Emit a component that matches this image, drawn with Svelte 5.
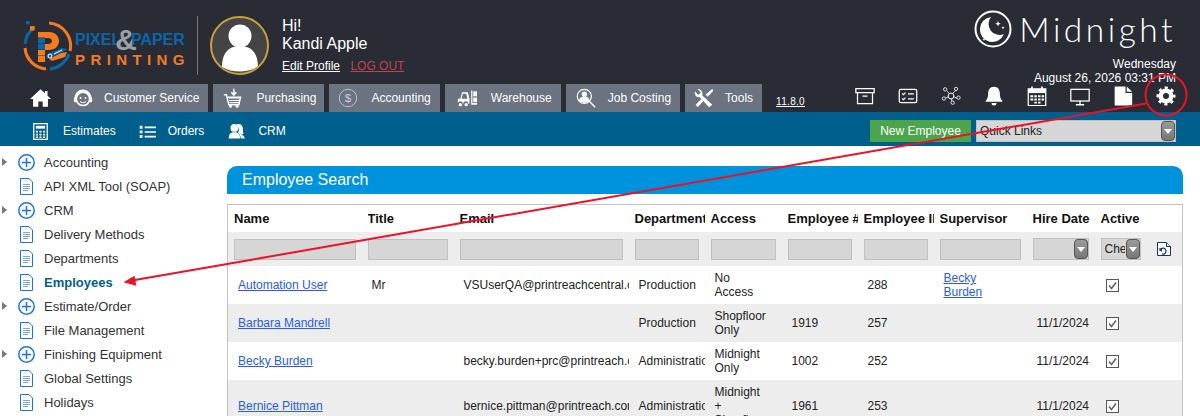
<script>
  const tabs = [
    { label: "Customer Service", w: 20, gap: 11, pl: 9, pr: 9, icon: `<circle cx="12" cy="13" r="8" fill="none" stroke="#fff" stroke-width="2"/><path d="M3 12a9 9 0 0 1 18 0" fill="none" stroke="#fff" stroke-width="2.4"/><rect x="1" y="11" width="3.5" height="6" rx="1.5" fill="#fff"/><rect x="19.5" y="11" width="3.5" height="6" rx="1.5" fill="#fff"/><circle cx="9" cy="12" r="1.2" fill="#fff"/><circle cx="15" cy="12" r="1.2" fill="#fff"/><path d="M8.5 16c2 2 5 2 7 0" fill="none" stroke="#fff" stroke-width="1.5"/>` },
    { label: "Purchasing", w: 20, gap: 13, pl: 10, pr: 8, icon: `<path d="M1 8h3l3 12h12l2-9H6" fill="none" stroke="#fff" stroke-width="1.8"/><path d="M7 12h13M7.500 15h12M8 17.500h11" stroke="#fff" stroke-width="1.4"/><path d="M13 1v6M10 5l3 3.500L16 5" fill="none" stroke="#fff" stroke-width="1.8"/><circle cx="9" cy="22" r="1.800" fill="#fff"/><circle cx="17" cy="22" r="1.800" fill="#fff"/>` },
    { label: "Accounting", w: 20, gap: 13, pl: 9, pr: 9, icon: `<circle cx="12" cy="12" r="10.500" fill="none" stroke="#ccd" stroke-width="1"/><text x="12" y="17" text-anchor="middle" font-size="14" fill="#ccd" font-family="Liberation Sans">$</text>` },
    { label: "Warehouse", w: 26, gap: 11, pl: 9, pr: 9, icon: `<path d="M1 13h3l2-8h7l2 8v6h-1.500a3 3 0 0 0-6 0H7a3 3 0 0 0-6 0zM7 7l-1.500 6h7L11 7z" fill="#fff" fill-rule="evenodd"/><circle cx="4" cy="20" r="2" fill="#fff"/><circle cx="11" cy="20" r="2" fill="#fff"/><path d="M17 3h1.500v15H24v2h-7z" fill="#fff"/><rect x="19.500" y="4" width="4.500" height="6" fill="#fff"/><rect x="19.500" y="11.500" width="4.500" height="5.500" fill="#fff"/>` },
    { label: "Job Costing", w: 20, gap: 12, pl: 10, pr: 9, icon: `<circle cx="10" cy="10" r="8.500" fill="none" stroke="#fff" stroke-width="1.500"/><circle cx="10" cy="7.500" r="3.200" fill="#fff"/><path d="M3.500 15c1-4 3.500-4.500 6.500-4.500s5.500.5 6.500 4.500c-3 3.500-10 3.500-13 0z" fill="#fff"/><path d="M16 16l7 7" stroke="#fff" stroke-width="1.800"/>` },
    { label: "Tools", w: 20, gap: 11, pl: 9, pr: 9, icon: `<path d="M4 1l4 4-1 2-2 1-4-4c-1 4 2 8 6 7l11 12 4-3L10 9c1-4-2-8-6-8z" fill="#fff"/><path d="M22 1l-8 7 2.500 2.500L23 3.500zM9 13l-7 7 2.500 3L11 16z" fill="#fff"/>` }
  ]

  const subLinks = [
    { label: "Estimates", w: 17, gap: 14, ml: 32, icon: `<path d="M2.500 1h19v22h-19z" fill="none" stroke="#fff" stroke-width="1.800"/><rect x="5.500" y="4" width="13" height="4" fill="#fff"/><path d="M5.500 11h3v2.500h-3zM10.500 11h3v2.500h-3zM15.500 11h3v2.500h-3zM5.500 15h3v2.500h-3zM10.500 15h3v2.500h-3zM15.500 15h3v2.500h-3zM5.500 19h3v2h-3zM10.500 19h3v2h-3zM15.500 19h3v2h-3z" fill="#fff"/>` },
    { label: "Orders", w: 17, gap: 12, ml: 23, icon: `<path d="M1 4h4v4H1zM1 10.500h4v4H1zM1 17h4v4H1zM8 5h16v2.400H8zM8 11.500h16v2.400H8zM8 18h16v2.400H8z" fill="#fff"/>` },
    { label: "CRM", w: 19, gap: 12, ml: 23, icon: `<circle cx="9" cy="7" r="5.500" fill="#fff"/><path d="M1 22c0-6 2-9 8-9s8 3 8 9z" fill="#fff"/><path d="M12 2c5-2 9 1 9 6 0 3 0 5 1 7-1 1-3 1-4 1 3 1 5 3 6 6h-6c0-4-2-7-4-9 2-2 2-7-2-11z" fill="#fff"/>` }
  ]

  const tools = [
    { icon: `<path d="M1 3h22v5H1zM3 8v13h18V8M9 12h6" fill="none" stroke="#fff" stroke-width="1.500"/>` },
    { icon: `<rect x="1.500" y="4" width="21" height="16" rx="2" fill="none" stroke="#fff" stroke-width="1.500"/><path d="M5 9l1.500 1.500L9 8M5 15l1.500 1.500L9 14M12 9.500h7M12 15.500h7" fill="none" stroke="#fff" stroke-width="1.400"/>` },
    { icon: `<path d="M7 6l5 5 6-6M12 11l-7 4M12 11l1 7M13 12l7 3" stroke="#fff" stroke-width="1" fill="none"/><circle cx="12" cy="12" r="3.500" fill="#292c35" stroke="#fff" stroke-width="1.200"/><circle cx="5" cy="4" r="2" fill="#292c35" stroke="#fff"/><circle cx="18" cy="3.500" r="2" fill="#292c35" stroke="#fff"/><circle cx="3.500" cy="15" r="2" fill="#292c35" stroke="#fff"/><circle cx="14" cy="20" r="2" fill="#292c35" stroke="#fff"/><circle cx="21" cy="14" r="2" fill="#292c35" stroke="#fff"/>` },
    { icon: `<path d="M12 1c-5 0-7 4-7 8 0 4-1 7-3 9v1h20v-1c-2-2-3-5-3-9 0-4-2-8-7-8z" fill="#fff"/><path d="M9 20.500a3 3 0 0 0 6 0z" fill="#fff"/>` },
    { icon: `<path d="M1.500 3.500h21v20h-21z" fill="none" stroke="#fff" stroke-width="1.500"/><path d="M1.500 3.500h21v5h-21z" fill="#fff"/><path d="M6 .5v5M18 .5v5" stroke="#fff" stroke-width="2"/><path d="M4 11h3.500v2.500H4zM8.800 11h3v2.500h-3zM13.200 11h3v2.500h-3zM17.500 11h3v2.500h-3zM4 15h3.500v2.500H4zM8.800 15h3v2.500h-3zM13.200 15h3v2.500h-3zM17.500 15h3v2.500h-3zM8.800 19h3v2h-3zM13.200 19h3v2h-3z" fill="#fff"/>` },
    { icon: `<rect x="1" y="4" width="22" height="14" fill="none" stroke="#fff" stroke-width="1.500"/><path d="M12 18v4M7 22.500h10" stroke="#fff" stroke-width="1.600"/>` },
    { icon: `<path d="M2 .5h13v8h8v15H2z" fill="#fff"/><path d="M16.500.5l6.500 6.500h-6.500z" fill="#fff"/>` },
    { icon: `<circle cx="12" cy="12" r="6.300" fill="none" stroke="#fff" stroke-width="5.400"/><circle cx="12" cy="12" r="9.800" fill="none" stroke="#fff" stroke-width="3.200" stroke-dasharray="3.800 3.900" stroke-dashoffset="1.900"/>` }
  ]

  const tree = [
    { label: "Accounting", folder: true },
    { label: "API XML Tool (SOAP)" },
    { label: "CRM", folder: true },
    { label: "Delivery Methods" },
    { label: "Departments" },
    { label: "Employees", active: true },
    { label: "Estimate/Order", folder: true },
    { label: "File Management" },
    { label: "Finishing Equipment", folder: true },
    { label: "Global Settings" },
    { label: "Holidays" }
  ]

  const cols = [134, 92, 175, 76, 77, 76, 76, 93, 68, 88]
  const heads = ["Name", "Title", "Email", "Department", "Access", "Employee #", "Employee ID", "Supervisor", "Hire Date", "Active"]

  const rows = [
    { name: "Automation User", title: "Mr", email: "VSUserQA@printreachcentral.com", dept: "Production", access: "No Access", num: "", id: "288", sup: "Becky Burden", hire: "" },
    { name: "Barbara Mandrell", title: "", email: "", dept: "Production", access: "Shopfloor Only", num: "1919", id: "257", sup: "", hire: "11/1/2024" },
    { name: "Becky Burden", title: "", email: "becky.burden+prc@printreach.com", dept: "Administration", access: "Midnight Only", num: "1002", id: "252", sup: "", hire: "11/1/2024" },
    { name: "Bernice Pittman", title: "", email: "bernice.pittman@printreach.com", dept: "Administration", access: "Midnight + Shopfloor", num: "1961", id: "253", sup: "", hire: "11/1/2024" }
  ]
</script>

<div class="page">
  <header>
    <div class="top">
      <div class="logo">
        <svg class="mark" viewBox="0 0 50 50" width="50" height="50">
          <g fill="none" stroke-width="3">
            <path d="M26 2.100A23 23 0 0 1 47 30" stroke="#f47b20"/>
            <path d="M46 33A23 23 0 0 1 27 48" stroke="#0b66a8"/>
            <path d="M23 48A23 23 0 0 1 2 27" stroke="#f47b20"/>
            <path d="M2 23A23 23 0 0 1 12 6" stroke="#0b66a8"/>
          </g>
          <rect x="3" y="0" width="3.500" height="3.500" fill="#0b66a8"/>
          <rect x="7" y="5" width="4.500" height="4.500" fill="#f47b20"/>
          <rect x="15" y="11" width="7" height="5.500" fill="#f47b20"/>
          <rect x="15" y="17" width="7" height="5.500" fill="#0b66a8"/>
          <rect x="15" y="23" width="7" height="5.500" fill="#0b66a8"/>
          <rect x="15" y="29" width="7" height="5.500" fill="#f47b20"/>
          <rect x="15" y="35" width="7" height="6" fill="#f47b20"/>
          <path d="M22 11h4c6 0 10 4 10 9s-4 9-10 9h-4v-6h3c2 0 4-1 4-3s-2-3-4-3h-3z" fill="#f47b20"/>
          <path d="M24 33l15-6 5 1-4 3-17 7z" fill="#0b66a8"/>
          <path d="M26 38l12-6 6-1-2 5-13 4z" fill="#f47b20"/>
          <circle cx="27" cy="35" r="2" fill="none" stroke="#fff"/>
          <path d="M31 33l8-4" stroke="#fff"/>
        </svg>
        <div class="wordmark">
          <div class="line1"><span>PIXEL</span><span class="amp">&amp;</span><span>PAPER</span></div>
          <div class="line2">PRINTING</div>
        </div>
      </div>
      <div class="divider"></div>
      <div class="avatar">
        <svg viewBox="0 0 54 54" width="54" height="54">
          <circle cx="27" cy="17" r="11.500" fill="#fff"/>
          <path d="M9 48c0-12 5-21 18-21s18 9 18 21c-10 6-26 6-36 0z" fill="#fff"/>
        </svg>
      </div>
      <div class="user">
        <div>Hi!</div>
        <div>Kandi Apple</div>
        <div class="user-links">
          <a href="#profile">Edit Profile</a>
          <a href="#logout" class="logout">LOG OUT</a>
        </div>
      </div>
      <div class="brand">
        <div class="midnight">
          <svg viewBox="0 0 38 38" width="38" height="38">
            <circle cx="19" cy="19" r="17.500" fill="none" stroke="#fff" stroke-width="2"/>
            <path d="M17 7a12.500 12.500 0 1 0 13 17 11 11 0 0 1-13-17z" fill="#fff"/>
            <path d="M24 11l.8 2 2 .8-2 .8-.8 2-.8-2-2-.8 2-.8zM29 16l.5 1.200 1.200.5-1.200.5-.5 1.200-.5-1.200-1.200-.5 1.200-.5zM10 27.500l.5 1.200 1.200.5-1.200.5-.5 1.200-.5-1.200-1.200-.5 1.200-.5z" fill="#fff"/>
          </svg>
          <span>Midnight</span>
        </div>
        <div class="date">Wednesday<br>August 26, 2026 03:31 PM</div>
      </div>
    </div>
    <nav class="tabs">
      <svg class="home" viewBox="0 0 24 20" width="21" height="18">
        <path d="M12 0L0 11h3.500v9h6v-6h5v6h6v-9H24l-4-3.700V2h-3v2.600z" fill="#fff"/>
      </svg>
      {#each tabs as tab}
        <a class="tab" href="#tab" style="padding: 0 {tab.pr}px 0 {tab.pl}px; gap: {tab.gap}px">
          <svg viewBox="0 0 24 24" width={tab.w} height="20">{@html tab.icon}</svg>
          {tab.label}
        </a>
      {/each}
      <a class="version" href="#version">11.8.0</a>
      <div class="tools">
        {#each tools as tool}
          <svg viewBox="0 0 24 24" width="20" height="20">{@html tool.icon}</svg>
        {/each}
      </div>
    </nav>
  </header>

  <div class="subbar">
    {#each subLinks as link}
      <a class="sublink" href="#sub" style="margin-left: {link.ml}px; gap: {link.gap}px">
        <svg viewBox="0 0 24 24" width={link.w} height="17">{@html link.icon}</svg>
        {link.label}
      </a>
    {/each}
    <div class="subright">
      <button class="new-btn">New Employee</button>
      <div class="select quick">
        <select><option>Quick Links</option></select>
        <span class="arrow"></span>
      </div>
    </div>
  </div>

  <main>
    <aside>
      {#each tree as item}
        <div class="node" class:active={item.active}>
          <span class="caret" class:show={item.folder}></span>
          {#if item.folder}
            <svg viewBox="0 0 17 17" width="17" height="17">
              <circle cx="8.500" cy="8.500" r="7.700" fill="none" stroke="#1a73e8" stroke-width="1.500"/>
              <path d="M8.500 4v9M4 8.500h9" stroke="#1a73e8" stroke-width="1.500"/>
            </svg>
          {:else}
            <svg viewBox="0 0 17 17" width="17" height="17">
              <path d="M2.500.5h8.500l3.500 3.500v12.500h-12z" fill="#fff" stroke="#1a73e8"/>
              <path d="M5 6.500h7M5 8.500h7M5 10.500h7M5 12.500h5" stroke="#7aa8e8"/>
            </svg>
          {/if}
          <span>{item.label}</span>
        </div>
      {/each}
    </aside>

    <section>
      <h1>Employee Search</h1>
      <table>
        <colgroup>
          {#each cols as w}<col style="width: {w}px">{/each}
        </colgroup>
        <thead>
          <tr>
            {#each heads as head}
              <th><div class="clip">{head}</div></th>
            {/each}
          </tr>
          <tr class="filters">
            {#each heads.slice(0, 8) as head}
              <td><input aria-label={head}></td>
            {/each}
            <td>
              <div class="select"><select aria-label="Hire Date"><option></option></select><span class="arrow"></span></div>
            </td>
            <td>
              <div class="active-filter">
                <div class="select small"><select aria-label="Active"><option>Checked</option></select><span class="arrow"></span></div>
                <svg viewBox="0 0 14 14" width="14" height="14">
                  <path d="M.5.5h9l4 4v9H.5z" fill="#fff" stroke="#1a2f7f"/>
                  <path d="M9.500.5v4h4" fill="#cfe4f7" stroke="#1a2f7f"/>
                  <path d="M3 9a3 3 0 1 1 2 3" fill="none" stroke="#1a2f7f" stroke-width="1.300"/>
                  <path d="M1.500 6.500h3.500v3.500z" fill="#1a2f7f"/>
                </svg>
              </div>
            </td>
          </tr>
        </thead>
        <tbody>
          {#each rows as row}
            <tr>
              <td><div class="clip pad"><a href="#emp">{row.name}</a></div></td>
              <td><div class="clip pad">{row.title}</div></td>
              <td><div class="clip pad">{row.email}</div></td>
              <td><div class="clip pad">{row.dept}</div></td>
              <td><div class="pad narrow">{row.access}</div></td>
              <td><div class="clip pad">{row.num}</div></td>
              <td><div class="clip pad">{row.id}</div></td>
              <td><div class="pad narrow"><a href="#emp">{row.sup}</a></div></td>
              <td><div class="clip pad">{row.hire}</div></td>
              <td>
                <svg class="check" viewBox="0 0 13 13" width="13" height="13">
                  <rect x=".5" y=".5" width="12" height="12" fill="#fff" stroke="#555"/>
                  <path d="M3 6.500l2.500 3L10 3.500" fill="none" stroke="#666" stroke-width="1.600"/>
                </svg>
              </td>
            </tr>
          {/each}
        </tbody>
      </table>
    </section>
  </main>

  <svg class="callout" viewBox="0 0 1200 416" width="1200" height="416">
    <circle cx="1166" cy="95" r="20.500" fill="none" stroke="#ee1126" stroke-width="2"/>
    <path d="M1146 103.500L132 280.600" stroke="#ee1126" stroke-width="2"/>
    <path d="M123.500 282.200l11-6.500 1.800 10z" fill="#ee1126"/>
  </svg>
</div>

<style>
  :global(body) {
    margin: 0;
    overflow: hidden;
    background: #fff;
    font-family: "Liberation Sans", Arial, sans-serif;
  }

  .page {
    position: relative;
    width: 1200px;
    height: 416px;
    overflow: hidden;
    font-size: 12px;
    color: #222;
  }

  header {
    background: #292c35;
    height: 112px;
    color: #fff;
  }

  .top {
    display: flex;
    height: 84px;
  }

  .logo {
    display: flex;
    width: 165px;
    margin: 21px 0 0 23px;
    height: 52px;
  }

  .mark {
    flex: none;
    margin-right: 2px;
  }

  .wordmark {
    padding-top: 11px;
    font-weight: bold;
    white-space: nowrap;
  }

  .line1 {
    display: flex;
    align-items: center;
    height: 16px;
    font-size: 16px;
    color: #0b66a8;
  }

  .amp {
    font-size: 30px;
    font-weight: bold;
    color: #9aa0a6;
    margin: 0 -6px;
  }

  .line2 {
    margin-top: 3px;
    font-size: 15px;
    letter-spacing: 5.400px;
    color: #f47b20;
  }

  .divider {
    width: 1px;
    height: 59px;
    margin: 16px 12px 0 9px;
    background: #777;
  }

  .avatar {
    box-sizing: border-box;
    width: 59px;
    height: 59px;
    margin-top: 16px;
    border: 2px solid #c9a13d;
    border-radius: 50%;
    background: #444;
    overflow: hidden;
    display: flex;
    align-items: center;
    justify-content: center;
  }

  .user {
    margin-left: 13px;
    padding-top: 17px;
    font-size: 16px;
    line-height: 18px;
  }

  .user-links {
    margin-top: 5px;
    font-size: 12px;
    line-height: 16px;
  }

  .user-links a {
    color: #fff;
    margin-right: 7px;
  }

  .user-links a.logout {
    color: #c0424c;
  }

  .brand {
    margin-left: auto;
    padding: 10px 24px 0 0;
    text-align: right;
  }

  .midnight {
    display: flex;
    align-items: center;
    height: 38px;
    gap: 7px;
    font-family: Lato, sans-serif;
    font-weight: 300;
    font-size: 33.500px;
    letter-spacing: 3.500px;
  }

  .date {
    margin-top: 9px;
    line-height: 14px;
  }

  .tabs {
    display: flex;
    align-items: stretch;
    height: 28px;
  }

  .home {
    margin: 5px 13px 0 30px;
  }

  .tab {
    display: flex;
    align-items: center;
    background: #6b7280;
    color: #fff;
    text-decoration: none;
    margin-right: 5px;
  }

  .version {
    margin: 11px 0 0 9px;
    width: 30px;
    font-size: 10px;
    line-height: 14px;
    height: 14px;
    color: #fff;
    letter-spacing: .3px;
  }

  .tools {
    display: flex;
    align-items: center;
    gap: 23px;
    margin: -4px 24px 0 auto;
  }

  .subbar {
    display: flex;
    align-items: center;
    box-sizing: border-box;
    height: 34px;
    padding-top: 4px;
    background: #005f8c;
  }

  .sublink {
    display: flex;
    align-items: center;
    color: #fff;
    text-decoration: none;
  }

  .subright {
    display: flex;
    gap: 5px;
    margin: 0 24px 0 auto;
  }

  .new-btn {
    width: 101px;
    height: 22px;
    padding: 0;
    border: 0;
    background: #4ca54c;
    color: #fff;
    font: inherit;
  }

  .select {
    position: relative;
    height: 22px;
  }

  .select select {
    appearance: none;
    box-sizing: border-box;
    width: 100%;
    height: 100%;
    padding: 0 15px 0 3px;
    border: 1px solid #c0c0c0;
    border-radius: 0;
    background: #d6d6d6;
    color: #222;
    font: inherit;
  }

  .quick {
    width: 200px;
  }

  .small {
    width: 40px;
  }

  .arrow {
    position: absolute;
    top: 1px;
    right: 1px;
    box-sizing: border-box;
    width: 14px;
    bottom: 1px;
    border: 1px solid #555;
    border-radius: 4px;
    background: linear-gradient(#9a9a9a, #777);
  }

  .arrow::after {
    content: "";
    position: absolute;
    top: 7px;
    left: 2px;
    border: 4px solid transparent;
    border-top: 5px solid #fff;
    border-bottom: 0;
  }

  main {
    display: flex;
  }

  aside {
    flex: none;
    width: 227px;
    padding-top: 4px;
    font-size: 13px;
    color: #333;
  }

  .node {
    display: flex;
    align-items: center;
    height: 24px;
  }

  .node svg {
    margin: 0 9px 0 11px;
    flex: none;
  }

  .caret {
    width: 0;
    height: 0;
    margin-left: 2px;
    border: 4px solid transparent;
    border-left: 5px solid transparent;
    border-right: 0;
  }

  .caret.show {
    border-left-color: #777;
  }

  .node.active {
    font-weight: bold;
    color: #005f8c;
  }

  section {
    width: 956px;
  }

  h1 {
    box-sizing: border-box;
    height: 28px;
    margin: 20px 0 10px;
    padding-left: 15px;
    border-radius: 10px 10px 0 0;
    background: #0093dd;
    color: #fff;
    font-size: 16px;
    font-weight: normal;
    line-height: 28px;
  }

  table {
    box-sizing: border-box;
    width: 956px;
    table-layout: fixed;
    border-collapse: collapse;
    border: 1px solid #c4c4c4;
  }

  th {
    height: 27px;
    padding: 0 0 0 6px;
    text-align: left;
    font-size: 13px;
    color: #111;
  }

  td {
    padding: 5px 0 5px 6px;
    vertical-align: middle;
  }

  .clip {
    overflow: hidden;
    white-space: nowrap;
  }

  .pad {
    padding-left: 4px;
    line-height: 14px;
  }

  .narrow {
    width: min-content;
  }

  .filters td {
    padding: 0 6px;
    height: 34px;
  }

  .filters,
  tbody tr:nth-child(even) {
    background: #ededed;
  }

  input {
    box-sizing: border-box;
    display: block;
    width: 100%;
    height: 21px;
    border: 1px solid #c0c0c0;
    background: #d6d6d6;
  }

  .active-filter {
    display: flex;
    align-items: center;
    gap: 16px;
  }

  a {
    color: #2a5bf0;
  }

  .check {
    display: block;
    margin-left: 5px;
  }

  .callout {
    position: absolute;
    top: 0;
    left: 0;
    pointer-events: none;
  }
</style>
